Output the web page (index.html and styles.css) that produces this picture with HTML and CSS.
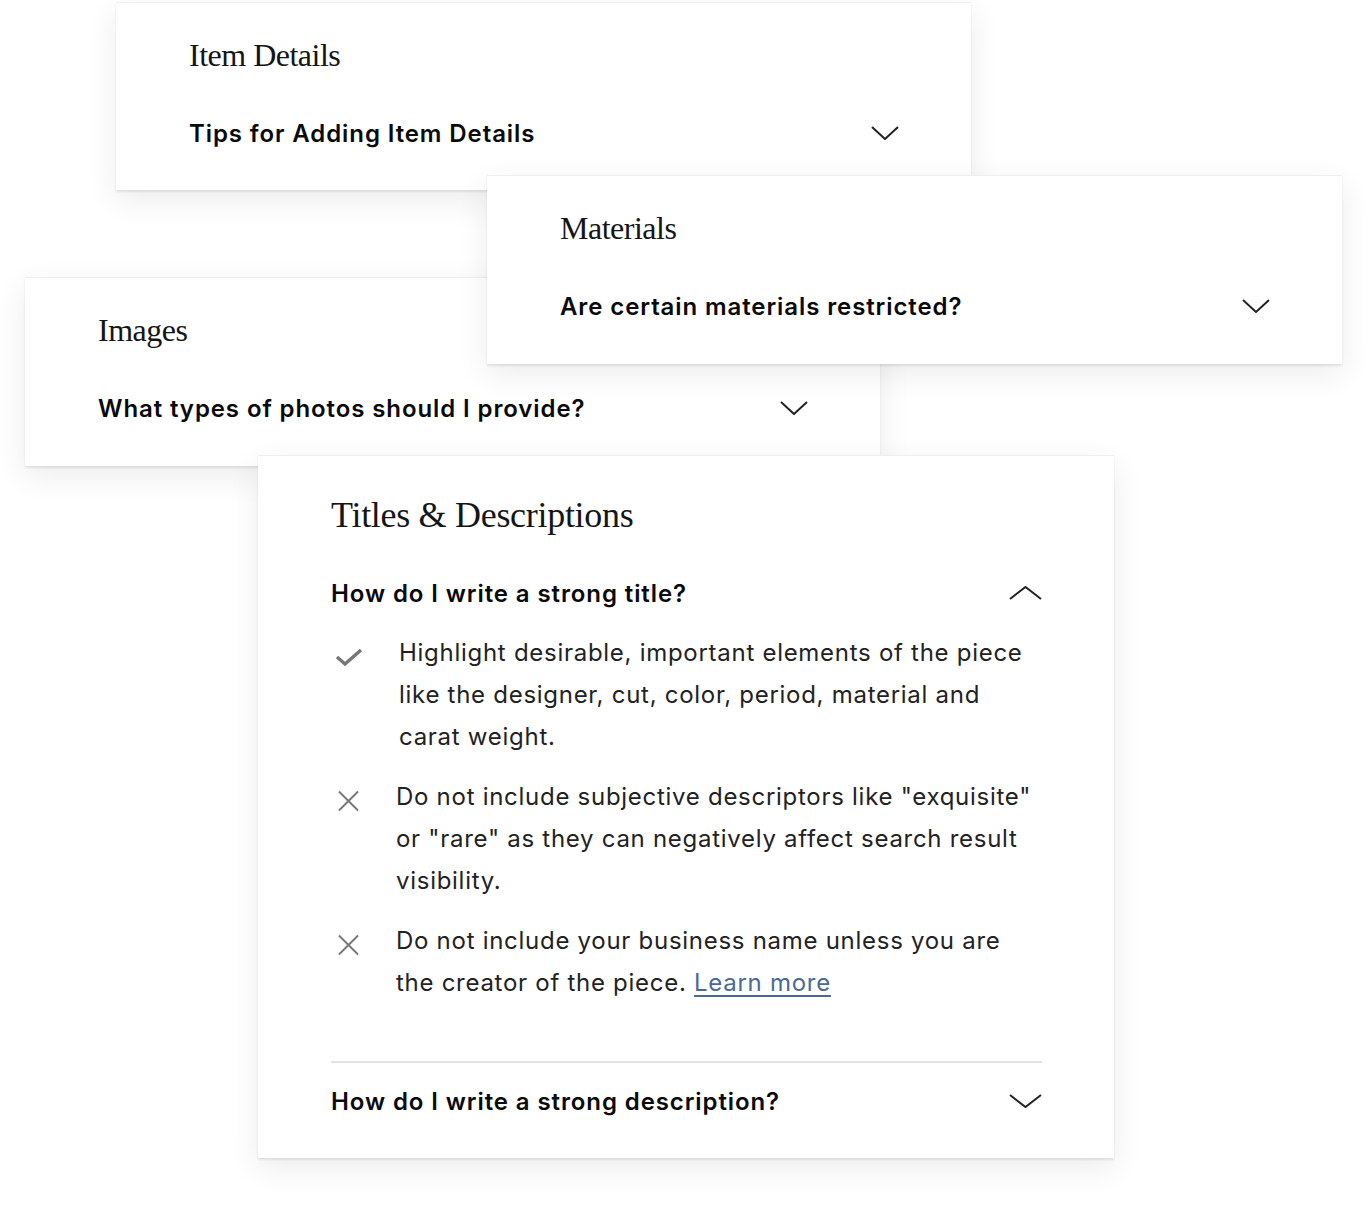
FILE: index.html
```html
<!DOCTYPE html>
<html lang="en">
<head>
    <meta charset="UTF-8">
    <meta name="viewport" content="width=device-width, initial-scale=1.0">
    <title>Listing Tips</title>
    <link rel="stylesheet" href="styles.css">
</head>
<body>
    <main class="canvas">
        <section class="card card-details">
            <h2>Item Details</h2>
            <div class="question">
                <span>Tips for Adding Item Details</span>
                <svg class="chevron" viewBox="0 0 28 14"><path d="M1 1 L14 13 L27 1"/></svg>
            </div>
        </section>

        <section class="card card-images">
            <h2>Images</h2>
            <div class="question">
                <span>What types of photos should I provide?</span>
                <svg class="chevron" viewBox="0 0 28 14"><path d="M1 1 L14 13 L27 1"/></svg>
            </div>
        </section>

        <section class="card card-materials">
            <h2>Materials</h2>
            <div class="question">
                <span>Are certain materials restricted?</span>
                <svg class="chevron" viewBox="0 0 28 14"><path d="M1 1 L14 13 L27 1"/></svg>
            </div>
        </section>

        <section class="card card-titles">
            <h2>Titles &amp; Descriptions</h2>
            <div class="question">
                <span>How do I write a strong title?</span>
                <svg class="chevron wide" viewBox="0 0 33 14"><path d="M1 13 L16.5 1 L32 13"/></svg>
            </div>
            <ul class="tips">
                <li class="tip tip-do">
                    <svg class="icon" viewBox="0 0 28 20"><path d="M2 10 L10 17 L26 3"/></svg>
                    <p>Highlight desirable, important elements of the piece like the designer, cut, color, period, material and carat weight.</p>
                </li>
                <li class="tip">
                    <svg class="icon" viewBox="0 0 22 22"><path d="M1 1 L21 21 M21 1 L1 21"/></svg>
                    <p>Do not include subjective descriptors like "exquisite" or "rare" as they can negatively affect search result visibility.</p>
                </li>
                <li class="tip">
                    <svg class="icon" viewBox="0 0 22 22"><path d="M1 1 L21 21 M21 1 L1 21"/></svg>
                    <p><span>Do not include your business name unless you are the creator of the piece.</span> <a href="#">Learn more</a></p>
                </li>
            </ul>
            <hr class="divider">
            <div class="question">
                <span>How do I write a strong description?</span>
                <svg class="chevron wide" viewBox="0 0 33 14"><path d="M1 1 L16.5 13 L32 1"/></svg>
            </div>
        </section>
    </main>
</body>
</html>
```

FILE: styles.css
```css
body {
    margin: 0;
    background-color: #fff;
    font-family: "Inter", "Liberation Sans", sans-serif;
    color: #111;
}

.canvas {
    position: relative;
    width: 1368px;
    height: 1210px;
    overflow: hidden;
}

.card {
    position: absolute;
    box-sizing: border-box;
    width: 855px;
    background-color: #fff;
    border-top: 1px solid #efefef;
    box-shadow: 0 2px 2px rgba(0, 0, 0, 0.09), 0 10px 30px rgba(0, 0, 0, 0.08);
    padding: 32px 72px 0 73px;
}

.card-details {
    left: 116px;
    top: 2px;
    height: 188px;
}

.card-images {
    left: 25px;
    top: 277px;
    height: 189px;
}

.card-materials {
    left: 487px;
    top: 175px;
    height: 189px;
}

.card-titles {
    left: 258px;
    top: 455px;
    width: 856px;
    height: 703px;
    padding: 37px 72px 0 73px;
}

h2 {
    margin: 0 0 42px 0;
    font-family: "Liberation Serif", serif;
    font-weight: normal;
    font-size: 32px;
    line-height: 40px;
    letter-spacing: -0.5px;
    color: #151515;
}

.card-titles h2 {
    font-size: 36px;
    line-height: 44px;
    margin-bottom: 40px;
    letter-spacing: -0.3px;
}

.question {
    display: flex;
    justify-content: space-between;
    align-items: center;
    height: 32px;
    font-size: 24px;
    font-weight: 600;
    letter-spacing: 0.9px;
    color: #0a0a0a;
}

.chevron {
    width: 28px;
    height: 14px;
    fill: none;
    stroke: #222;
    stroke-width: 2;
}

.chevron.wide {
    width: 33px;
}

.tips {
    list-style: none;
    margin: 23px 0 0 0;
    padding: 0;
}

.tip {
    display: flex;
    margin-bottom: 18px;
}

.tip:last-child {
    margin-bottom: 0;
}

.tip .icon {
    flex: none;
    width: 21px;
    height: 22px;
    margin: 14px 37px 0 7px;
    fill: none;
    stroke: #777;
    stroke-width: 2;
}

.tip-do .icon {
    width: 28px;
    height: 20px;
    margin: 15px 36px 0 4px;
    stroke-width: 3.5;
}

.tip p {
    margin: 0;
    font-size: 24px;
    line-height: 42px;
    letter-spacing: 0.72px;
    color: #222;
}

.tip a {
    color: #4a6a94;
    text-decoration: underline;
    text-underline-offset: 4px;
}

.divider {
    margin: 57px 0 22px 0;
    border: none;
    border-top: 2px solid #e2e2e2;
}
```
